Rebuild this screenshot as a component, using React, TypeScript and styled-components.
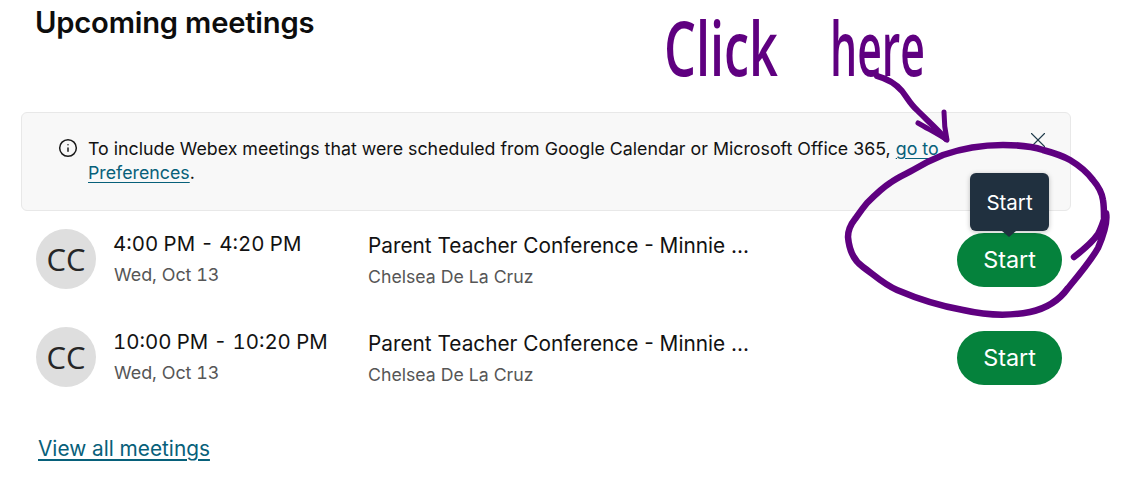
import React from "react";
import styled, { createGlobalStyle } from "styled-components";
import { Info, X } from "lucide-react";

const INK = "#5f0080";
const LINK = "#07607a";

const GlobalStyle = createGlobalStyle`
  html, body {
    margin: 0;
    padding: 0;
    background: #ffffff;
  }
  body {
    font-family: Inter, "Liberation Sans", sans-serif;
    color: #121212;
    overflow: hidden;
  }
`;

const Page = styled.div`
  position: relative;
  width: 1126px;
  height: 489px;
  overflow: hidden;
  padding: 0 55px 0 21px;
  box-sizing: border-box;
`;

const Heading = styled.h1`
  margin: 0;
  padding: 6px 0 0 14px;
  height: 112px;
  box-sizing: border-box;
  font-size: 29.2px;
  line-height: 34px;
  font-weight: 600;
  letter-spacing: -0.2px;
  color: #0d0d0d;
`;

const Banner = styled.div`
  position: relative;
  display: flex;
  gap: 10px;
  height: 99px;
  box-sizing: border-box;
  padding: 24px 120px 0 36px;
  background: #f8f8f8;
  border: 1px solid #e8e8e8;
  border-radius: 6px;
`;

const BannerIcon = styled.span`
  display: flex;
  flex: none;
  margin-top: 1px;
  height: 20px;
  color: #1a1a1a;
`;

const BannerText = styled.p`
  margin: 0;
  font-size: 17.8px;
  line-height: 24px;
  color: #121212;
`;

const Link = styled.a`
  color: ${LINK};
  text-decoration: underline;
  text-underline-offset: 3px;
`;

const CloseButton = styled.button`
  position: absolute;
  top: 14px;
  right: 19px;
  display: flex;
  padding: 0;
  border: 0;
  background: none;
  color: #1f3a4a;
`;

const Row = styled.div`
  display: flex;
  align-items: center;
  height: 98px;
  padding: 0 9px 0 15px;
`;

const Avatar = styled.div`
  display: flex;
  flex: none;
  align-items: center;
  justify-content: center;
  width: 60px;
  height: 60px;
  margin-bottom: 2px;
  border-radius: 50%;
  background: #dedede;
  font-family: "Open Sans", sans-serif;
  font-size: 31px;
  color: #262626;
`;

const TimeColumn = styled.div`
  flex: none;
  width: 254px;
  margin-left: 18px;
  margin-bottom: 2px;
`;

const TimeText = styled.div`
  margin-left: -1px;
  font-size: 20.4px;
  line-height: 26px;
  font-variant-numeric: tabular-nums;
  color: #121212;
`;

const SubText = styled.div`
  margin-top: 6px;
  font-size: 17.7px;
  line-height: 24px;
  color: #565656;
`;

const DateText = styled(SubText)`
  font-size: 17.9px;
  font-variant-numeric: tabular-nums;
`;

const TitleColumn = styled.div`
  flex: 1;
  min-width: 0;
  padding-top: 2px;
`;

const Title = styled.div`
  width: 390px;
  overflow: hidden;
  white-space: nowrap;
  font-size: 20.8px;
  line-height: 26px;
  color: #121212;
`;

const StartButton = styled.button`
  position: relative;
  flex: none;
  width: 105px;
  height: 54px;
  padding: 0 0 2px;
  border: 0;
  border-radius: 27px;
  background: #05823c;
  color: #ffffff;
  font-family: inherit;
  font-size: 23.4px;
`;

const Tooltip = styled.div`
  position: absolute;
  left: 13px;
  bottom: 56px;
  display: flex;
  align-items: center;
  justify-content: center;
  width: 79px;
  height: 58px;
  border-radius: 6px;
  background: #20303f;
  box-shadow: 0 1px 5px rgba(0, 0, 0, 0.25);
  color: #ffffff;
  font-size: 20.5px;

  &::after {
    content: "";
    position: absolute;
    left: 32px;
    bottom: -6px;
    border-left: 7px solid transparent;
    border-right: 7px solid transparent;
    border-top: 6px solid #20303f;
  }
`;

const AllMeetings = styled(Link)`
  display: inline-block;
  margin: 28px 0 0 17px;
  font-size: 20.8px;
  line-height: 28px;
`;

const InkLayer = styled.svg`
  position: absolute;
  inset: 0;
  width: 1126px;
  height: 489px;
  pointer-events: none;
  fill: none;
  stroke: ${INK};
  stroke-linecap: round;
  stroke-linejoin: round;
`;

const Note = styled.text`
  fill: ${INK};
  stroke: none;
  font-family: "Open Sans", sans-serif;
  font-size: 76px;
  font-weight: 600;
`;

const meetings = [
  { time: "4:00 PM - 4:20 PM", tip: true },
  { time: "10:00 PM - 10:20 PM", tip: false },
];

export default function App() {
  return (
    <Page>
      <GlobalStyle />
      <Heading>Upcoming meetings</Heading>
      <Banner>
        <BannerIcon>
          <Info size={20} strokeWidth={1.8} />
        </BannerIcon>
        <BannerText>
          To include Webex meetings that were scheduled from Google Calendar or Microsoft Office 365,{" "}
          <Link>go to</Link> <Link>Preferences</Link>.
        </BannerText>
        <CloseButton>
          <X size={26} strokeWidth={1} />
        </CloseButton>
      </Banner>
      {meetings.map((m) => (
        <Row key={m.time}>
          <Avatar>CC</Avatar>
          <TimeColumn>
            <TimeText>{m.time}</TimeText>
            <DateText>Wed, Oct 13</DateText>
          </TimeColumn>
          <TitleColumn>
            <Title>Parent Teacher Conference - Minnie ...</Title>
            <SubText>Chelsea De La Cruz</SubText>
          </TitleColumn>
          <StartButton>
            Start
            {m.tip && <Tooltip>Start</Tooltip>}
          </StartButton>
        </Row>
      ))}
      <AllMeetings>View all meetings</AllMeetings>

      <InkLayer viewBox="0 0 1126 489">
        <Note x={664} y={76} textLength={114} lengthAdjust="spacingAndGlyphs">
          Click
        </Note>
        <Note x={830} y={76} textLength={95} lengthAdjust="spacingAndGlyphs">
          here
        </Note>
        <path
          strokeWidth={6}
          d="M877 76 C888 79 896 84 902 91 C908 99 911 105 917 110 C926 119 938 130 946 139"
        />
        <path strokeWidth={5} d="M918 123 C928 129 938 134 947 140 C945 131 944 121 944 112" />
        <path
          strokeWidth={6.5}
          d="M1074 257 C1083 250 1092 243 1098 234 C1102 227 1104 220 1106 213 C1108 222 1104 234 1098 248 C1090 262 1078 276 1068 288 C1058 302 1044 309 1030 312 C1010 316 985 315 963 310 C940 306 918 299 897 290 C883 284 873 274 863 267 C853 260 849 249 848 237 C848 229 851 224 855 219 C860 212 862 209 867 203 C875 195 882 188 890 183 C898 177 906 174 913 170 C923 164 933 159 943 155 C963 148 983 145 1003 145 C1018 145 1031 146 1043 150 C1054 153 1063 156 1070 160 C1080 166 1087 172 1093 180 C1099 187 1102 193 1103 200 C1104 206 1104 212 1104 218"
        />
      </InkLayer>
    </Page>
  );
}
